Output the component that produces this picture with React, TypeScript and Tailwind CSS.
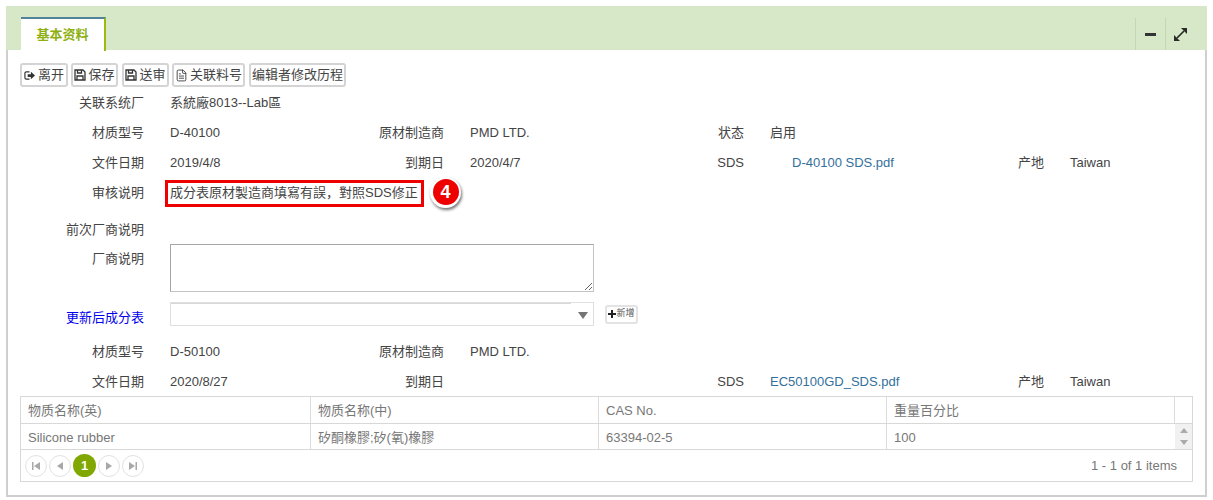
import React from "react";
import { FileText } from "lucide-react";

const font = { fontFamily: '"Liberation Sans","Noto Sans CJK SC",sans-serif' };

function Btn({ icon, text, w }: { icon?: React.ReactNode; text: string; w: string }) {
  return (
    <div className={`${w} h-[24px] flex items-center justify-center gap-[2px] bg-white border-2 border-[#d4d4d4] rounded-[3px] text-[13px] text-[#444] whitespace-nowrap`}>
      {icon}
      {text}
    </div>
  );
}

function Floppy() {
  return (
    <svg width="12" height="12" viewBox="0 0 12 12" fill="none" stroke="#333" strokeWidth="1.300">
      <path d="M1 1h8l2 2v8H1z" />
      <path d="M3.500 1v3h4V1" />
      <path d="M3 11V7h6v4" />
    </svg>
  );
}

function Field({ label, value, link, offset }: { label?: string; value?: string; link?: boolean; offset?: boolean }) {
  return (
    <div className="flex w-[300px] shrink-0 items-center">
      <div className="w-[124px] text-right text-[#444]">{label}</div>
      <div className={`ml-[26px] whitespace-nowrap ${link ? "text-[#33709c]" : "text-[#444]"} ${offset ? "pl-[22px]" : ""}`}>{value}</div>
    </div>
  );
}

function Row({ h, children }: { h: string; children: React.ReactNode }) {
  return <div className={`flex items-center ${h}`}>{children}</div>;
}

function PagerBtn({ children }: { children: React.ReactNode }) {
  return (
    <div className="w-[22px] h-[22px] rounded-full border border-[#e2e2e2] bg-white flex items-center justify-center">
      <svg width="10" height="10" viewBox="0 0 10 10" fill="#a8a8a8">{children}</svg>
    </div>
  );
}

const cols = ["w-[290px]", "w-[288px]", "w-[288px]", "w-[288px]"];

export default function App() {
  return (
    <div className="w-[1213px] h-[500px] bg-white pt-[6px] px-[6px] text-[13px] overflow-hidden" style={font}>
      <div className="w-[1201px]">
        <div className="h-[44px] bg-[#d6e8c8] flex items-end pl-[15px]">
          <div className="w-[85px] h-[34px] -mb-px bg-white border-t-2 border-t-[#52829a] border-r-2 border-r-[#9abb0c] flex items-center justify-center font-bold text-[13px] text-[#8db010] z-10">
            基本资料
          </div>
          <div className="ml-auto h-[32px] flex self-end">
            <div className="w-[30px] h-[32px] border-l border-[#c3d6b5] flex items-center justify-center">
              <div className="w-[11px] h-[3px] bg-[#333]" />
            </div>
            <div className="w-[42px] h-[32px] border-l border-[#c3d6b5] flex items-start justify-start pl-[8px] pt-[10px]">
              <svg width="13" height="13" viewBox="0 0 13 13" fill="#2b2b2b">
                <path d="M7 0h6v6z" />
                <path d="M0 7v6h6z" />
                <path d="M3 10L10 3" stroke="#2b2b2b" strokeWidth="1.700" />
              </svg>
            </div>
          </div>
        </div>
        <div className="h-[447px] border-l-2 border-r-2 border-b-2 border-[#cfcfcf] pl-[12px] pr-[12px] pt-[13px]">
          <div className="flex h-[24px]">
            <Btn
              w="w-[48px]"
              text="离开"
              icon={
                <svg width="11" height="11" viewBox="0 0 12 12" className="mr-[1px]">
                  <path d="M6 2H2.500A1.500 1.500 0 0 0 1 3.500v5A1.500 1.500 0 0 0 2.500 10H6" fill="none" stroke="#333" strokeWidth="1.300" />
                  <path d="M4 4.500h3.500V2L12 6l-4.500 4V7.500H4z" fill="#333" />
                </svg>
              }
            />
            <div className="w-[3px]" />
            <Btn w="w-[47px]" text="保存" icon={<Floppy />} />
            <div className="w-[4px]" />
            <Btn w="w-[47px]" text="送审" icon={<Floppy />} />
            <div className="w-[3px]" />
            <Btn w="w-[73px]" text="关联料号" icon={<FileText size={13} strokeWidth={1.6} color="#333" />} />
            <div className="w-[4px]" />
            <Btn w="w-[97px]" text="编辑者修改历程" />
          </div>
          <div className="mt-px">
            <Row h="h-[30px]">
              <Field label="关联系统厂" value="系統廠8013--Lab區" />
            </Row>
            <Row h="h-[30px]">
              <Field label="材质型号" value="D-40100" />
              <Field label="原材制造商" value="PMD LTD." />
              <Field label="状态" value="启用" />
            </Row>
            <Row h="h-[30px]">
              <Field label="文件日期" value="2019/4/8" />
              <Field label="到期日" value="2020/4/7" />
              <Field label="SDS" value="D-40100 SDS.pdf" link offset />
              <Field label="产地" value="Taiwan" />
            </Row>
            <Row h="h-[30px]">
              <div className="w-[124px] text-right text-[#444]">审核说明</div>
              <div className="ml-[21px] relative h-[27px] w-[259px] border-[3px] border-[#ee0000] flex items-center pl-[2px] text-[#444] whitespace-nowrap">
                成分表原材製造商填寫有誤，對照SDS修正
                <div className="absolute left-[262px] top-[-6px] w-[31px] h-[31px] rounded-full bg-white shadow-[1px_2px_3px_rgba(0,0,0,0.55)] flex items-center justify-center">
                  <div className="w-[26px] h-[26px] rounded-full bg-[#ee0000] text-white font-bold text-[18px] flex items-center justify-center">4</div>
                </div>
              </div>
            </Row>
            <div className="h-[34px] flex items-end pb-[3px]">
              <div className="w-[124px] text-right text-[#444]">前次厂商说明</div>
            </div>
            <div className="flex mt-[2px]">
              <div className="w-[124px] text-right text-[#444] pt-[5px]">厂商说明</div>
              <textarea className="ml-[26px] w-[424px] h-[48px] bg-white border border-[#c4c4c4] border-t-[#a6a6a6] border-l-[#a6a6a6] outline-none block" readOnly />
            </div>
            <div className="flex items-center mt-[10px] h-[24px]">
              <div className="w-[124px] text-right text-[#0000ee] pt-[7px]">更新后成分表</div>
              <div className="ml-[26px] w-[424px] h-[24px] border border-[#dfdfdf] flex flex-col">
                <div className="w-[400px] h-px bg-[#d8d8d8]" />
                <div className="flex-1 flex items-center justify-end pr-[5px]">
                  <svg width="10" height="8" viewBox="0 0 10 8" fill="#757575"><path d="M0 1h10L5 8z" /></svg>
                </div>
              </div>
              <div className="ml-[11px] w-[33px] h-[19px] border-2 border-[#e3e3e3] rounded-[3px] flex items-center justify-center text-[9px] text-[#555] whitespace-nowrap">
                <svg width="8" height="8" viewBox="0 0 8 8" fill="#222"><path d="M3 0h2v3h3v2H5v3H3V5H0V3h3z" /></svg>
                新增
              </div>
            </div>
            <Row h="h-[30px] mt-[11px]">
              <Field label="材质型号" value="D-50100" />
              <Field label="原材制造商" value="PMD LTD." />
            </Row>
            <Row h="h-[30px]">
              <Field label="文件日期" value="2020/8/27" />
              <Field label="到期日" />
              <Field label="SDS" value="EC50100GD_SDS.pdf" link />
              <Field label="产地" value="Taiwan" />
            </Row>
          </div>
          <div className="w-[1173px] -mt-px border border-[#d8d8d8] text-[#777] text-[13px] h-[86px]">
            <div className="flex h-[27px] border-b border-[#d8d8d8]">
              {["物质名称(英)", "物质名称(中)", "CAS No.", "重量百分比"].map((t, i) => (
                <div key={t} className={`${cols[i]} border-r border-[#dcdcdc] pl-[7px] pt-px flex items-center`}>{t}</div>
              ))}
            </div>
            <div className="flex h-[26px] border-b border-[#d8d8d8]">
              {["Silicone rubber", "矽酮橡膠;矽(氧)橡膠", "63394-02-5", "100"].map((t, i) => (
                <div key={t} className={`${cols[i]} ${i < 3 ? "border-r border-[#dcdcdc]" : ""} pl-[7px] pt-[3px] flex items-center`}>{t}</div>
              ))}
              <div className="flex-1 bg-[#f1f1f1] flex flex-col items-center justify-between py-[4px]">
                <svg width="8" height="5" viewBox="0 0 8 5" fill="#aaa"><path d="M4 0l4 5H0z" /></svg>
                <svg width="8" height="5" viewBox="0 0 8 5" fill="#aaa"><path d="M0 0h8L4 5z" /></svg>
              </div>
            </div>
            <div className="flex items-center h-[31px] pl-[4px] pr-[15px]">
              <div className="flex items-center gap-[2px]">
                <PagerBtn><path d="M1 1h1.500v8H1zM9 1v8L3 5z" /></PagerBtn>
                <PagerBtn><path d="M8 1v8L2 5z" /></PagerBtn>
                <div className="w-[23px] h-[23px] rounded-full bg-[#80a800] text-white font-bold flex items-center justify-center">1</div>
                <PagerBtn><path d="M2 1v8l6-4z" /></PagerBtn>
                <PagerBtn><path d="M1 1v8l6-4zM7.500 1H9v8H7.500z" /></PagerBtn>
              </div>
              <div className="ml-auto">1 - 1 of 1 items</div>
            </div>
          </div>
        </div>
      </div>
    </div>
  );
}
